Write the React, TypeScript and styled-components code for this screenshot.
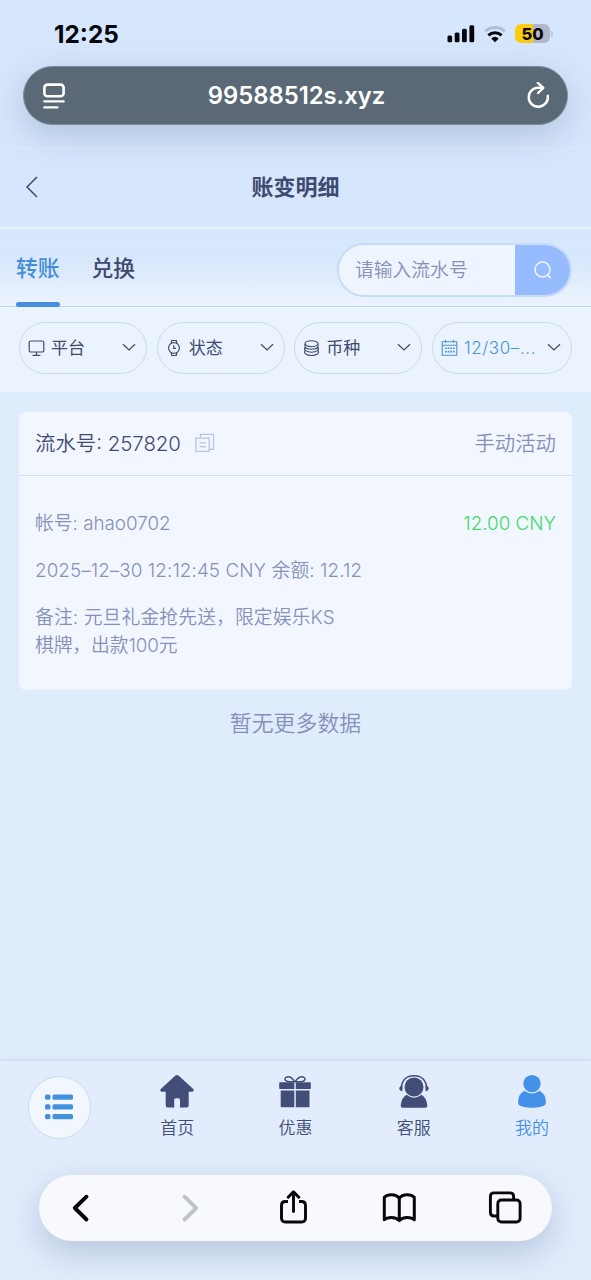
import React from "react";
import styled, { createGlobalStyle } from "styled-components";

const GlobalStyle = createGlobalStyle`
  * { box-sizing: border-box; }
  body {
    margin: 0;
    background: #dfecfc;
    font-family: Inter, "Noto Sans CJK SC", sans-serif;
    font-weight: 350;
    color: #3f4a70;
  }
  svg { display: block; flex: none; }
`;

const Screen = styled.div`
  width: 591px;
  height: 1280px;
  overflow: hidden;
  display: flex;
  flex-direction: column;
  background: #dfecfc;
`;

const BrowserTop = styled.header`
  height: 148px;
  flex: none;
  background: #d6e6fc;
  padding: 0 23px;
`;

const StatusBar = styled.div`
  height: 66px;
  padding: 0 15px 0 31px;
  display: flex;
  justify-content: space-between;
  align-items: center;
`;

const Clock = styled.span`
  font-size: 24.3px;
  font-weight: 700;
  color: #05070c;
  line-height: 30px;
  padding-top: 2px;
`;

const StatusIcons = styled.div`
  display: flex;
  align-items: center;
  gap: 8px;
  padding-top: 1px;
`;

const Battery = styled.div`
  width: 35px;
  height: 19px;
  border-radius: 6px;
  background: linear-gradient(90deg, #fdcc0f 51%, #b0b8ca 51%);
  color: #0a0a0a;
  font-size: 16.5px;
  font-weight: 800;
  line-height: 20px;
  text-align: center;
`;

const BatteryGroup = styled.div`
  display: flex;
  align-items: center;
  gap: 1px;
  margin-left: 1px;
`;

const BatteryNub = styled.i`
  width: 2px;
  height: 6px;
  border-radius: 0 2px 2px 0;
  background: #b9c6db;
`;

const AddressBar = styled.div`
  position: relative;
  z-index: 2;
  height: 59px;
  padding: 0 17px 0 19px;
  border-radius: 30px;
  background: #5a6975;
  border: 1px solid #7d8b99;
  box-shadow: 0 10px 34px rgba(75, 100, 140, 0.27);
  display: flex;
  align-items: center;
  justify-content: space-between;
`;

const Address = styled.span`
  color: #fff;
  font-size: 23.8px;
  font-weight: 600;
`;

const TitleBar = styled.div`
  height: 81px;
  flex: none;
  display: grid;
  grid-template-columns: 60px 1fr 60px;
  align-items: center;
  padding-bottom: 2px;
  background: #d6e6fc;
  border-top: 1px solid #dfebfc;
  border-bottom: 2px solid #eaf4ff;
`;

const BackButton = styled.div`
  padding-left: 25px;
`;

const Title = styled.h1`
  margin: 0;
  text-align: center;
  font-size: 22px;
  font-weight: 600;
  line-height: 30px;
  color: #3f4a70;
`;

const TabBar = styled.div`
  height: 78px;
  flex: none;
  display: flex;
  justify-content: space-between;
  padding: 0 19px 0 16px;
  background: linear-gradient(180deg, #d5e6fb 0%, #d9e8fc 45%, #ecf3fe 100%);
  border-bottom: 1px solid #bdd6f0;
`;

const Tabs = styled.div`
  display: flex;
  gap: 31.5px;
`;

const Tab = styled.div<{ $active?: boolean }>`
  width: 44px;
  height: 78px;
  padding-top: 23px;
  white-space: nowrap;
  font-size: 21.8px;
  line-height: 32px;
  font-weight: 500;
  color: ${(p) => (p.$active ? "#448ed8" : "#3f4a70")};
  display: flex;
  flex-direction: column;
  justify-content: space-between;

  &::after {
    content: "";
    height: 5px;
    border-radius: 2.5px;
    background: ${(p) => (p.$active ? "#468fdd" : "transparent")};
  }
`;

const SearchBox = styled.div`
  margin-top: 14px;
  width: 235px;
  height: 54px;
  display: flex;
  border: 2px solid #c4dcf5;
  border-radius: 27px;
  overflow: hidden;
  background: #eff5fe;
`;

const Placeholder = styled.span`
  flex: 1;
  padding-left: 16px;
  font-size: 18.8px;
  line-height: 51px;
  color: #8690b8;
`;

const SearchButton = styled.div`
  width: 56px;
  margin: -1px -1px -1px 0;
  background: #96bbff;
  display: flex;
  align-items: center;
  justify-content: center;
`;

const Filters = styled.div`
  height: 85px;
  flex: none;
  padding: 15px 19px 0;
  display: grid;
  grid-template-columns: 128px 128px 128px 140px;
  justify-content: space-between;
  background: #ebf3fe;
`;

const Filter = styled.div<{ $active?: boolean }>`
  height: 52px;
  padding: 0 10px 0 8px;
  border: 1.5px solid #c5dbf2;
  border-radius: 26px;
  display: flex;
  align-items: center;
  gap: 5px;
  font-size: 17px;
  font-weight: ${(p) => (p.$active ? 350 : 400)};
  color: ${(p) => (p.$active ? "#4c92cf" : "#3f4a70")};

  span {
    flex: 1;
    white-space: nowrap;
    line-height: 24px;
    letter-spacing: ${(p) => (p.$active ? "0.6px" : "0")};
  }
`;

const Content = styled.main`
  flex: 1;
  padding: 20px 19px 0;
`;

const Card = styled.section`
  height: 278px;
  border-radius: 7px;
  background: #f2f7ff;
`;

const CardHead = styled.div`
  height: 64px;
  padding: 0 16px;
  border-bottom: 1.5px solid #c8dff0;
  display: flex;
  align-items: center;
  font-size: 20.4px;
  line-height: 30px;
`;

const Serial = styled.span`
  margin-right: 14px;
`;

const RecordType = styled.span`
  margin-left: auto;
  color: #8690b8;
`;

const CardBody = styled.div`
  padding: 34px 16px 0;
  display: flex;
  flex-direction: column;
  gap: 19px;
  font-size: 18.8px;
  line-height: 28px;
  color: #8690b8;
`;

const Line = styled.div<{ $tracking?: number }>`
  display: flex;
  justify-content: space-between;
  white-space: nowrap;
  letter-spacing: ${(p) => p.$tracking ?? 0}px;
`;

const Amount = styled.span`
  color: #40d968;
`;

const EndNote = styled.p`
  margin: 17px 0 0;
  text-align: center;
  font-size: 21.9px;
  line-height: 32px;
  color: #8690b8;
`;

const Bottom = styled.footer`
  height: 219px;
  flex: none;
  background: #e2ecfc;
  box-shadow: 0 -1px 3px rgba(140, 170, 210, 0.3);
`;

const AppNav = styled.nav`
  height: 114px;
  display: grid;
  grid-template-columns: repeat(5, 1fr);
  justify-items: center;
`;

const MenuButton = styled.div`
  margin-top: 14.5px;
  width: 63px;
  height: 63px;
  border: 1.5px solid #c9ddf0;
  border-radius: 50%;
  background: #f2f7fe;
  display: flex;
  align-items: center;
  justify-content: center;
`;

const NavItem = styled.div<{ $active?: boolean }>`
  padding-top: 13px;
  display: flex;
  flex-direction: column;
  align-items: center;
  gap: 7px;
  font-size: 17px;
  line-height: 26px;
  font-weight: 350;
  color: ${(p) => (p.$active ? "#4391e2" : "#434e78")};
`;

const Toolbar = styled.div`
  margin: 0 39px;
  height: 66px;
  padding: 0 29px 0 24px;
  border-radius: 33px;
  background: #f7f9fc;
  box-shadow: 0 12px 34px rgba(70, 100, 145, 0.28);
  display: flex;
  align-items: center;
  justify-content: space-between;
`;

const Chevron = () => (
  <svg width="14" height="10" viewBox="0 0 14 10" fill="none" stroke="#3f4763" strokeWidth="1.2">
    <path d="M1 1.200l6 5.800 6-5.800" />
  </svg>
);

const PlatformIcon = () => (
  <svg width="18" height="18" viewBox="0 0 18 18" fill="none" stroke="#3f4a70" strokeWidth="1.2">
    <rect x="1.200" y="2" width="14.600" height="11" rx="1.6" />
    <path d="M8.500 13v3.300M4.600 16.300h7.800" />
  </svg>
);

const WatchIcon = () => (
  <svg width="18" height="18" viewBox="0 0 18 18" fill="none" stroke="#3f4a70" strokeWidth="1.2">
    <circle cx="8" cy="9" r="5.4" />
    <path d="M5.200 4.300l.5-2.800h4.600l.5 2.800M5.200 13.700l.5 2.800h4.600l.5-2.800M7.700 6.300v3h2.400" />
  </svg>
);

const CoinsIcon = () => (
  <svg width="18" height="18" viewBox="0 0 18 18" fill="none" stroke="#3f4a70" strokeWidth="1.1">
    <ellipse cx="8.500" cy="4.700" rx="6.500" ry="3" />
    <path d="M2 4.700v2.600c0 1.700 2.900 3 6.500 3s6.500-1.300 6.500-3V4.700M15 8.200c1.700 2.500-1.500 5-6.500 5s-8.200-2.500-6.500-5M15 11.600c1.700 2.500-1.500 4.900-6.500 4.900s-8.200-2.400-6.500-4.900" />
  </svg>
);

const CalendarIcon = () => (
  <svg width="18" height="18" viewBox="0 0 18 18" fill="none" stroke="#4c92cf" strokeWidth="1.1">
    <path d="M1.200 2.700h14.600v13.500H1.200zM1.200 6.300h14.600M4.500.800v3M12.500.800v3" />
    <path d="M4 9.200h9.600M4 12.600h9.600" strokeWidth="1.600" strokeDasharray="1.700 0.930" />
  </svg>
);

export default function App() {
  return (
    <Screen>
      <GlobalStyle />
      <BrowserTop>
        <StatusBar>
          <Clock>12:25</Clock>
          <StatusIcons>
            <svg width="29" height="18" viewBox="0 0 29 18" fill="#05070c">
              <rect x="0.500" y="10.600" width="4.600" height="6.600" rx="1.500" />
              <rect x="7.700" y="7.400" width="4.800" height="9.800" rx="1.500" />
              <rect x="15" y="3.700" width="4.800" height="13.500" rx="1.500" />
              <rect x="22.400" y="0.300" width="4.800" height="16.900" rx="1.500" />
            </svg>
            <svg width="22" height="18" viewBox="0 0 22 18" fill="none" strokeWidth="3">
              <path d="M1.200 6.300a14.300 14.300 0 0 1 19.600 0" stroke="#b0bed4" />
              <path d="M4.400 10.400a9.600 9.600 0 0 1 13.200 0" stroke="#05070c" />
              <path d="M7.200 13.400a5.700 5.700 0 0 1 7.600 0L11 17.300z" fill="#05070c" />
            </svg>
            <BatteryGroup>
              <Battery>50</Battery>
              <BatteryNub />
            </BatteryGroup>
          </StatusIcons>
        </StatusBar>
        <AddressBar>
          <svg width="24" height="28" viewBox="0 0 24 28" fill="none" stroke="#fff" strokeWidth="2.600" strokeLinecap="round">
            <rect x="1.400" y="2.600" width="19.200" height="11.600" rx="3" />
            <path d="M1.300 19.400h19.400M1.300 25.400h13.200" strokeWidth="2.200" />
          </svg>
          <Address>99588512s.xyz</Address>
          <svg width="24" height="28" viewBox="0 0 24 28" fill="none" stroke="#fff" strokeWidth="2.400" strokeLinecap="round" strokeLinejoin="round">
            <path d="M21.800 13.800a9.600 9.600 0 1 1-9.500-8.200l3.700.2" />
            <path d="M11.900.900l5.400 4.900-5.200 5.200" />
          </svg>
        </AddressBar>
      </BrowserTop>

      <TitleBar>
        <BackButton>
          <svg width="13" height="22" viewBox="0 0 13 22" fill="none" stroke="#3f4a70" strokeWidth="1.500">
            <path d="M12 1L2 11l10 10" />
          </svg>
        </BackButton>
        <Title>账变明细</Title>
      </TitleBar>

      <TabBar>
        <Tabs>
          <Tab $active>转账</Tab>
          <Tab>兑换</Tab>
        </Tabs>
        <SearchBox>
          <Placeholder>请输入流水号</Placeholder>
          <SearchButton>
            <svg width="18" height="18" viewBox="0 0 18 18" fill="none" stroke="#f4f8ff" strokeWidth="1.400">
              <circle cx="8.500" cy="8.500" r="7.500" />
              <path d="M13.400 14l3.400 3" />
            </svg>
          </SearchButton>
        </SearchBox>
      </TabBar>

      <Filters>
        <Filter><PlatformIcon /><span>平台</span><Chevron /></Filter>
        <Filter><WatchIcon /><span>状态</span><Chevron /></Filter>
        <Filter><CoinsIcon /><span>币种</span><Chevron /></Filter>
        <Filter $active><CalendarIcon /><span>12/30–...</span><Chevron /></Filter>
      </Filters>

      <Content>
        <Card>
          <CardHead>
            <Serial>流水号: 257820</Serial>
            <svg width="20" height="22" viewBox="0 0 20 22" fill="none" stroke="#b9c3e0" strokeWidth="1.300">
              <path d="M1 5.200h13.200v13.200H1zM5.500 5V1.300h13v15h-4M4.500 9.800h6.500M4.500 13.600h6.500" />
            </svg>
            <RecordType>手动活动</RecordType>
          </CardHead>
          <CardBody>
            <Line><span>帐号: ahao0702</span><Amount>12.00 CNY</Amount></Line>
            <Line $tracking={0.1}>2025–12–30 12:12:45 CNY 余额: 12.12</Line>
            <div>
              <Line $tracking={0.13}>备注: 元旦礼金抢先送，限定娱乐KS</Line>
              <Line $tracking={-0.1}>棋牌，出款100元</Line>
            </div>
          </CardBody>
        </Card>
        <EndNote>暂无更多数据</EndNote>
      </Content>

      <Bottom>
        <AppNav>
          <MenuButton>
            <svg width="30" height="26" viewBox="0 0 30 26" fill="#4391dc">
              {[0.500, 10.300, 20].map((y) => (
                <g key={y}>
                  <rect x="1" y={y} width="5.500" height="5.300" rx="1.700" />
                  <rect x="8.500" y={y} width="20.500" height="5.300" rx="1.500" />
                </g>
              ))}
            </svg>
          </MenuButton>
          <NavItem>
            <svg width="34" height="34" viewBox="0 0 34 34" fill="#434e78">
              <path d="M15.500 1.600q1.500-1.200 3 0L33 14.700c1.400 1.400.6 3-.8 3H28.700v13.800q0 2-2 2H20v-7.800q0-1.500-1.500-1.500h-2.800q-1.500 0-1.500 1.500v7.800H7.700q-2 0-2-2V17.700H1.800c-1.500 0-2.200-1.700-.8-3z" />
            </svg>
            首页
          </NavItem>
          <NavItem>
            <svg width="34" height="34" viewBox="0 0 34 34" fill="#434e78">
              <path d="M2 8.200h14.300v6.900H2q-.8 0-.8-.8V9q0-.8.8-.8zM17.800 8.200H32q.8 0 .8.800v5.300q0 .8-.8.800H17.800zM2.700 16.600h13.600v16.600H3.500q-.8 0-.8-.8zM17.800 16.600h13.700v15.800q0 .8-.8.800H17.800z" />
              <path d="M16.700 7.700C14 7.900 7.200 8 7 5.400 6.800 2.600 12.400.4 16.700 7.700zm.6 0C20 7.900 26.800 8 27 5.400 27.200 2.600 21.600.4 17.300 7.700z" fill="none" stroke="#434e78" strokeWidth="1.500" />
            </svg>
            优惠
          </NavItem>
          <NavItem>
            <svg width="34" height="34" viewBox="0 0 34 34" fill="#434e78">
              <path d="M4.400 15C4.400 5.600 10 1.700 17 1.700S29.600 5.600 29.600 15" fill="none" stroke="#434e78" strokeWidth="1.600" />
              <circle cx="17" cy="13" r="9.500" />
              <path d="M5.400 11.500v5.800C1.300 17 1.300 12 5.400 11.500zM28.600 11.500v5.800c4.100-.3 4.100-5.300 0-5.800z" />
              <path d="M9.500 20.800q7.500 5.800 15 0 4.700 2.700 5.700 10.200.3 2.800-2 2.800H5.800q-2.300 0-2-2.800Q4.800 23.500 9.500 20.800z" />
            </svg>
            客服
          </NavItem>
          <NavItem $active>
            <svg width="34" height="34" viewBox="0 0 34 34" fill="#4391e8">
              <circle cx="17" cy="9.600" r="8.700" />
              <path d="M9.500 16.800q7.500 5.600 15 0 6.300 3.400 6.300 10.200v2.500c0 3-9 4.300-13.800 4.300S3.200 32.500 3.200 29.500V27q0-6.800 6.300-10.200z" />
            </svg>
            我的
          </NavItem>
        </AppNav>
        <Toolbar>
          <svg width="36" height="36" viewBox="0 0 36 36" fill="none" stroke="#05070c" strokeWidth="3.900" strokeLinecap="round" strokeLinejoin="round">
            <path d="M23.500 6.700L11.800 18l11.700 11.500" />
          </svg>
          <svg width="36" height="36" viewBox="0 0 36 36" fill="none" stroke="#c0c3c8" strokeWidth="3.900" strokeLinecap="round" strokeLinejoin="round">
            <path d="M15.500 6.700L27.200 18 15.500 29.500" />
          </svg>
          <svg width="36" height="36" viewBox="0 0 36 36" fill="none" stroke="#05070c" strokeWidth="2.900" strokeLinecap="round" strokeLinejoin="round">
            <path d="M13 11.500h-2.500q-4 0-4 4V28q0 4 4 4h16q4 0 4-4V15.500q0-4-4-4H24" strokeLinecap="butt" />
            <path d="M18.500 21.500V2.300M13.200 7.300l5.300-5.500 5.300 5.500" />
          </svg>
          <svg width="36" height="36" viewBox="0 0 36 36" fill="none" stroke="#05070c" strokeWidth="3" strokeLinejoin="round" strokeLinecap="round">
            <path d="M18.300 8.200C14.500 3.500 6.500 4 3.300 7.300V29.800c3-3 11.300-3.500 15 .8 3.700-4.300 12-3.800 15-.8V7.300C30 4 22 3.500 18.300 8.200zV30.500" />
          </svg>
          <svg width="36" height="36" viewBox="0 0 36 36" fill="none" stroke="#05070c" strokeWidth="2.900">
            <path d="M10.500 26H7q-3.600 0-3.600-3.600V6.500q0-3.600 3.600-3.600h16q3.600 0 3.600 3.600V9" />
            <rect x="10.800" y="10" width="22.300" height="22" rx="3.600" />
          </svg>
        </Toolbar>
      </Bottom>
    </Screen>
  );
}
